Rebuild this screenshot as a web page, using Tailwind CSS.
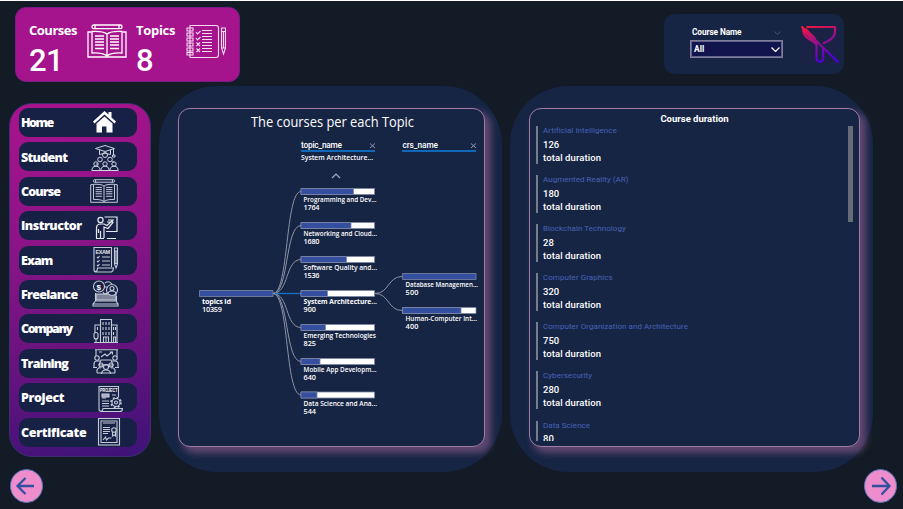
<!DOCTYPE html>
<html lang="en">
<head>
<meta charset="utf-8">
<title>Courses dashboard</title>
<script src="https://cdn.jsdelivr.net/npm/@tailwindcss/browser@4"></script>
</head>
<body class="bg-[#121b26] overflow-hidden">
<svg class="hidden">
  <symbol id="book" viewBox="0 0 40 34">
    <g fill="none" stroke="currentColor" stroke-width="1.3">
      <rect x="5" y="1" width="30" height="3.6" rx="1.6"/><path d="M8 1v3.6M32 1v3.6M4.500 8H1v25h38V8h-3.500"/>
      <path d="M20 10q-4-3-15-2.500V29q11-.5 15 3 4-3.500 15-3V7.500Q24 7 20 10zv22"/>
      <path d="M8 12h9M8 15h9M8 18h9M8 21h9M8 24.500h9M23 12h9M23 15h9M23 18h9M23 21h9M23 24.500h9"/>
    </g>
  </symbol>
</svg>
<div class="w-[903px] h-[509px] flex flex-col border-t border-white font-['Comic_Sans_MS','Open_Sans',sans-serif] text-white">

  <header class="h-[85px] shrink-0 flex justify-between pl-[15px] pr-[59px]">
    <section class="mt-[6px] w-[225px] h-[75px] rounded-[11px] bg-[#a5138d] border border-[#7b1c86] flex pl-[13px]">
      <div class="w-[58px] pt-[13px]">
        <h2 class="text-[13px] leading-[18px] font-bold tracking-[-0.5px]">Courses</h2>
        <p class="font-['Roboto',sans-serif] text-[31px] leading-[43px] tracking-[-0.5px] font-medium">21</p>
      </div>
      <svg class="w-10 h-[34px] mt-4"><use href="#book"/></svg>
      <div class="w-[49px] ml-[9px] pt-[13px]">
        <h2 class="text-[13px] leading-[18px] font-bold tracking-[-0.3px]">Topics</h2>
        <p class="font-['Roboto',sans-serif] text-[31px] leading-[43px] font-medium tracking-[-0.5px]">8</p>
      </div>
      <svg class="w-[40px] h-[35px] mt-4 ml-px" viewBox="0 0 40 35" fill="none" stroke="#f5dcf1" stroke-width="1.1">
        <path d="M4 4V1.500h26a2.500 2.500 0 0 1 2.500 2.500v27a2.500 2.500 0 0 1-2.500 2.500H4V31"/>
        <path d="M4 4v27M1 4h6v3H1zM1 9h6v3H1zM1 14h6v3H1zM1 19h6v3H1zM1 24h6v3H1zM1 28.500h6v2.500H1z"/>
        <path d="M10 8l1.500 2 3-3M10 14l1.500 2 3-3M10.500 18.500l3.500 3.500M14 18.500l-3.500 3.500M10.500 24.500l3.500 3.500M14 24.500l-3.500 3.500"/>
        <path d="M16 6.500h10M16 9.500h10M16 12.500h10M16 15.500h10M16 18.500h10M16 21.500h10M16 24.500h10M16 27.500h10"/>
        <path d="M35.500 4h4v20l-2 6-2-6zM35.500 7.500h4M35.500 24h4M37.500 8v16"/>
      </svg>
    </section>

    <section class="mt-[13px] w-[180px] h-[60px] rounded-[10px] bg-[#172545] flex pl-[26px]">
      <div class="w-[93px] pt-[11px]">
        <div class="flex items-center justify-between h-[15px] pl-[2px] pr-[2px]">
          <span class="font-['Roboto',sans-serif] font-bold text-[8.300px] leading-[13px] tracking-[-0.1px]">Course Name</span>
          <svg class="w-[7px] h-1" viewBox="0 0 7 4" fill="none" stroke="#4c5468"><path d="M.5.5l3 3 3-3"/></svg>
        </div>
        <div class="h-[18px] border border-[#7f7f9c] outline outline-1 -outline-offset-2 outline-[#62628a] bg-[#12154d] flex items-center justify-between pl-[3px] pr-[2px]">
          <span class="font-['Roboto',sans-serif] font-bold text-[8.500px] pt-px">All</span>
          <svg class="w-[9px] h-[5px]" viewBox="0 0 9 5" fill="none" stroke="#fff" stroke-width="1.200"><path d="M.5.5l4 4 4-4"/></svg>
        </div>
      </div>
      <svg class="ml-[17px] mt-[11px] w-[40px] h-[39px] bg-[#1a2246]" viewBox="0 0 40 39" fill="none" stroke="url(#funnel)" stroke-width="2.200" stroke-linejoin="round">
        <defs><linearGradient id="funnel" gradientUnits="userSpaceOnUse" x1="6" y1="0" x2="20" y2="38"><stop stop-color="#fb1738"/><stop offset=".5" stop-color="#96108b"/><stop offset="1" stop-color="#4b00db"/></linearGradient></defs>
        <path d="M1.500 1.500l37 36M6.500 2h28.500v4.500q0 6-7 9.500l-5 2.500M3 3q0 7.500 6 11 4 2.500 7.500 5v14.500a3.300 3.300 0 0 0 6.600 0V23"/><path d="M4 5l12 13M5 4l10 10" stroke-width="3"/>
      </svg>
    </section>
  </header>

  <main class="h-[386px] shrink-0 flex">
    <nav class="ml-[9px] mt-[17px] w-[142px] h-[354px] rounded-[23px] border border-[#392f70] bg-linear-[168deg,#a9138c_0%,#8b1487_38%,#64137e_72%,#3d1378_100%] pl-[9px] pt-1 flex flex-col gap-[5.400px] text-[12.500px] font-extrabold">
      <a class="h-[29px] shrink-0 w-[118px] rounded-[9px] bg-[#172145] flex items-center"><span class="w-[72px] pl-[2px] pt-[2px] tracking-[-1.500px]">Home</span>
        <svg class="w-[30px] h-[29px]" viewBox="0 0 30 29" fill="#fff"><path d="M13.500 3L2 13.500l1.500 2L13.500 6.500 23.500 15.500l1.500-2-4.500-4V4h-3v2.500zM13.500 8.500L5.500 15.500v9h5.500v-6h4.500v6H21.500v-9z"/></svg></a>
      <a class="h-[29px] shrink-0 w-[118px] rounded-[9px] bg-[#172145] flex items-center"><span class="w-[72px] pl-[2px] pt-[2px] tracking-[-0.700px]">Student</span>
        <svg class="w-[30px] h-[29px]" viewBox="0 0 30 29" fill="none" stroke="#cfd3df" stroke-width="1"><path d="M4.500 6.500l9.500-3 9.500 3-9.500 3zM8.500 8v4.500q5.500-2.500 11 0V8M22.500 7v6M21.500 13h2.500v2h-2.500z"/><circle cx="14" cy="13" r="2.500"/><circle cx="9" cy="17.500" r="2.300"/><circle cx="19" cy="17.500" r="2.300"/><circle cx="5" cy="22" r="2.200"/><circle cx="14" cy="22" r="2.200"/><circle cx="23" cy="22" r="2.200"/><path d="M1 29v-2q1-3 4-3t4 3v2M10 29v-2q1-3 4-3t4 3v2M19 29v-2q1-3 4-3t4 3v2M1 28.500h26M6 23v-2M22 21v-2"/></svg></a>
      <a class="h-[29px] shrink-0 w-[118px] rounded-[9px] bg-[#172145] flex items-center text-white"><span class="w-[70px] pl-[2px] pt-[2px] tracking-[-0.900px]">Course</span>
        <svg class="w-[28px] h-[24px] ml-px text-[#d5d9e5]" viewBox="0 0 40 34" preserveAspectRatio="none"><use href="#book"/></svg></a>
      <a class="h-[29px] shrink-0 w-[118px] rounded-[9px] bg-[#172145] flex items-center"><span class="w-[72px] pl-[2px] pt-[2px] tracking-[-0.500px]">Instructor</span>
        <svg class="w-[30px] h-[29px]" viewBox="0 0 30 29" fill="none" stroke="#e8eaf0" stroke-width="1.2"><circle cx="9.500" cy="9" r="2.600"/><path d="M13.500 6H26v14.500H15M17 9h6M16 11h5M5.500 27v-10q0-4 4-4h3.500l3 1.500 5-4.500 1 1.500-5 6-4-1.500V27M9.500 20v7M7.500 18v4M5 27.500h8M16 27.500h9"/></svg></a>
      <a class="h-[29px] shrink-0 w-[118px] rounded-[9px] bg-[#172145] flex items-center"><span class="w-[72px] pl-[2px] pt-[2px] tracking-[-0.900px]">Exam</span>
        <svg class="w-[30px] h-[29px]" viewBox="0 0 30 29" fill="none" stroke="#c5cad9" stroke-width="1.100"><path d="M3 24V1.500h17.500V21M3 24q0 2 2.500 2h15q2-1 2-4h-16q0 4-3 3.500M6 11l1 1 1.500-2M6 15l1 1 1.500-2M6 19l1 1 1.500-2M11 11h8M11 15h8M11 19h8M23.500 2h3v16l-1.500 4-1.500-4zM23.500 5h3M23.500 17.500h3M25 5v12"/><text x="4.500" y="7.800" font-size="5.500" font-family="Liberation Sans" font-weight="bold" fill="#e0e3eb" stroke="none" textLength="14.500">EXAM</text></svg></a>
      <a class="h-[29px] shrink-0 w-[118px] rounded-[9px] bg-[#172145] flex items-center"><span class="w-[72px] pl-[2px] pt-[2px] tracking-[-0.700px]">Freelance</span>
        <svg class="w-[30px] h-[29px]" viewBox="0 0 30 29" fill="none" stroke="#c5cad9" stroke-width="1.100"><path d="M5 14h20v6H5z" fill="#7e849b"/><path d="M4.500 13v8h21v-5M4.500 21L2 24v2h25v-2l-2-3M2 24h25"/><circle cx="8" cy="6.500" r="5.500" fill="#172145"/><circle cx="21" cy="10" r="5.500" fill="#172145"/><circle cx="21" cy="8.500" r="2"/><path d="M17 14q0-3 4-3t4 3M14 3q4-3 7 1M12 12q1 3 4 1M13 7h3"/><text x="5.500" y="9.500" font-size="8" font-family="Liberation Sans" fill="#fff" stroke="none">$</text></svg></a>
      <a class="h-[29px] shrink-0 w-[118px] rounded-[9px] bg-[#172145] flex items-center"><span class="w-[72px] pl-[2px] pt-[2px] tracking-[-1.400px]">Company</span>
        <svg class="w-[30px] h-[29px]" viewBox="0 0 30 29" fill="none" stroke="#c5cad9" stroke-width="1.100"><path d="M9.500 28.500V5.500h11v23M9.500 11H4v8M20.500 11H26v17.500M3 28.500h24M12 8v3M15 8v3M18 8v3M12 13v3M15 13v3M18 13v3M12 18v3M15 18v3M18 18v3M22.500 13v3M24.500 13v3M22.500 18v3M6.500 13v3M12.500 28.500V23h5v5.500M15 23v5.500M22.500 28v-5h2v5M5 24v4.500"/><rect x="3" y="18.500" width="4" height="6.500" rx="2"/></svg></a>
      <a class="h-[29px] shrink-0 w-[118px] rounded-[9px] bg-[#172145] flex items-center"><span class="w-[72px] pl-[2px] pt-[2px] tracking-[-0.800px]">Training</span>
        <svg class="w-[30px] h-[29px]" viewBox="0 0 30 29" fill="none" stroke="#c5cad9" stroke-width="1.100"><path d="M5 7V.8h21V8M4 .8h23M10 8l4-3 2 2 5-4M19 3h2.500v2.500M8 3h3"/><circle cx="6" cy="9" r="2.200"/><circle cx="24" cy="9" r="2.200"/><path d="M3 19v-4q0-3 3-3h3M27 19v-4q0-3-3-3h-3M2 18.500h4M24 18.500h4M8 16l2-5h10l2 5z"/><circle cx="10" cy="16" r="2"/><circle cx="20" cy="16" r="2"/><circle cx="15" cy="18" r="2.500"/><path d="M6 24v-3q1-3 4-2M24 24v-3q-1-3-4-2M10.500 25q0-4 4.500-4t4.500 4M6 24h18"/></svg></a>
      <a class="h-[29px] shrink-0 w-[118px] rounded-[9px] bg-[#172145] flex items-center"><span class="w-[72px] pl-[2px] pt-[2px] tracking-[-0.400px]">Project</span>
        <svg class="w-[33px] h-[29px]" viewBox="0 0 33 29" fill="none" stroke="#c5cad9" stroke-width="1.100"><path d="M8 26V3.500h19.500V14M8 26q0 2.500 3 2.500h18q2.500 0 2.500-3H12q0 2.500-2 3M11 15h4M11 18h7M11 20.500h7M11 23h7M21 12h4"/><path d="M11 11h7v3h-7z" fill="#a8aec2"/><circle cx="25" cy="19.500" r="4"/><circle cx="25" cy="19.500" r="1.500"/><circle cx="25" cy="19.500" r="5" stroke-width="1.600" stroke-dasharray="2 1.930"/><text x="9" y="9" font-size="5" font-family="Liberation Sans" font-weight="bold" fill="#fff" stroke="none" textLength="17.500" lengthAdjust="spacingAndGlyphs">PROJECT</text></svg></a>
      <a class="h-[29px] shrink-0 w-[118px] rounded-[9px] bg-[#172145] flex items-center"><span class="w-[72px] pl-[2px] pt-[2px] tracking-[-0.300px]">Certificate</span>
        <svg class="w-[30px] h-[29px]" viewBox="0 0 30 29" fill="none" stroke="#c5cad9" stroke-width="1.100"><rect x="7.500" y=".5" width="21" height="26.500"/><path d="M10 3h16v21.500H10zM12 5h12M12 9.500h7M12 11.500h7M12 13.500h7M12 15.500h5M12 22l2.500-3 1 3 2-2h3M21.500 14v4l1.500-1 1.500 1v-4"/><circle cx="23" cy="12" r="2.300"/></svg></a>
    </nav>

    <section class="ml-[8px] w-[343px] rounded-[58px] bg-[#172545] pl-[19px] pt-[22px]">
      <div class="w-[307px] h-[339px] rounded-[12px] border border-[#a27ba5] bg-[#172545] shadow-[5px_5px_7px_1px_rgba(170,108,158,0.5)]">
        <svg class="w-[305px] h-[337px]" viewBox="179 109 305 337" fill="#fff" font-family="Comic Sans MS, Open Sans, sans-serif">
          <text x="251" y="127" font-size="14" textLength="163" lengthAdjust="spacingAndGlyphs">The courses per each Topic</text>
          <g font-family="Roboto, sans-serif" font-size="8.300" font-weight="500">
            <text x="301" y="148.200" textLength="41">topic_name</text><text x="402.500" y="148.200" textLength="35.500">crs_name</text>
          </g>
          <path d="M370 143.500l5 4.500M375 143.500l-5 4.500M471 143.500l5 4.500M476 143.500l-5 4.500" stroke="#a8b4c4" stroke-width=".8"/>
          <path d="M301 151h74M402 151h74" stroke="#1068b8" stroke-width="1.800"/>
          <path d="M332 178l4-4 4 4" fill="none" stroke="#a9b0bc" stroke-width="1.100"/>
          <g fill="none" stroke="#8b93a5">
            <path d="M273 293.500C289 293.500 285 191.500 301 191.500M273 293.500C289 293.500 285 225.500 301 225.500M273 293.500C289 293.500 285 259.500 301 259.500M273 293.500C289 293.500 285 327.500 301 327.500M273 293.500C289 293.500 285 361.500 301 361.500M273 293.500C289 293.500 285 395 301 395M375 293.500C389 293.500 388 276.500 402 276.500M375 293.500C389 293.500 388 310.500 402 310.500"/>
            <path d="M275 293.500h26" stroke="#1470c4" stroke-width="1.300"/>
          </g>
          <g stroke="#7d86a3" stroke-width=".8">
            <path d="M301 188.500h73.500v6H301zM301 222.500h73.500v6H301zM301 256.500h73.500v6H301zM301 290.500h73.500v6H301zM301 324.500h73.500v6H301zM301 358.500h73.500v6H301zM301 392h73.500v6H301zM402.500 307.500H476v6h-73.500z"/>
            <path fill="#344f9f" d="M199.500 290.500H273v6h-73.500zM301 188.500h52.500v6H301zM301 222.500h50v6H301zM301 256.500h45.500v6H301zM301 290.500h26.500v6H301zM301 324.500h24.500v6H301zM301 358.500h19v6H301zM301 392h16v6H301zM402.500 273.500H476v6h-73.500zM402.500 307.500h58.500v6h-58.500z"/>
          </g>
          <g font-size="7.300" font-weight="600">
            <text x="301" y="160" textLength="72" lengthAdjust="spacingAndGlyphs">System Architecture...</text>
            <text x="202" y="304" textLength="29" font-weight="700">topics id</text><text x="202" y="312" textLength="20">10359</text>
            <text x="303.500" y="202" textLength="73" lengthAdjust="spacingAndGlyphs">Programming and Dev...</text><text x="303.500" y="210" textLength="16">1764</text>
            <text x="303.500" y="236" textLength="73.500" lengthAdjust="spacingAndGlyphs">Networking and Cloud...</text><text x="303.500" y="244" textLength="16">1680</text>
            <text x="303.500" y="270" textLength="73.500" lengthAdjust="spacingAndGlyphs">Software Quality and...</text><text x="303.500" y="278" textLength="16">1536</text>
            <text x="303.500" y="304" textLength="73.500" lengthAdjust="spacingAndGlyphs" font-weight="700">System Architecture...</text><text x="303.500" y="312" textLength="12.500">900</text>
            <text x="303.500" y="338" textLength="72.500" lengthAdjust="spacingAndGlyphs">Emerging Technologies</text><text x="303.500" y="346" textLength="12.500">825</text>
            <text x="303.500" y="372" textLength="73" lengthAdjust="spacingAndGlyphs">Mobile App Developm...</text><text x="303.500" y="380" textLength="12.500">640</text>
            <text x="303.500" y="406" textLength="73.500" lengthAdjust="spacingAndGlyphs">Data Science and Ana...</text><text x="303.500" y="414" textLength="12.500">544</text>
            <text x="405.500" y="287" textLength="72.500" lengthAdjust="spacingAndGlyphs">Database Managemen...</text><text x="405.500" y="295" textLength="13">500</text>
            <text x="405.500" y="321" textLength="71.500" lengthAdjust="spacingAndGlyphs">Human-Computer Int...</text><text x="405.500" y="329" textLength="13">400</text>
          </g>
        </svg>
      </div>
    </section>

    <section class="ml-[8px] w-[363px] rounded-[58px] bg-[#172545] pl-[19px] pt-[22px]">
      <div class="w-[331px] h-[339px] rounded-[12px] border border-[#a27ba5] bg-[#172545] shadow-[5px_5px_7px_1px_rgba(170,108,158,0.5)] font-['Roboto',sans-serif]">
        <h2 class="h-[17px] pt-[2px] text-center text-[9.500px] leading-[15px] font-bold">Course duration</h2>
        <div class="flex justify-between h-[315px] overflow-hidden pl-[6px] pr-[6px] text-[9.500px] font-medium">
          <ul class="flex flex-col gap-[11.100px]">
            <li class="h-[38px] shrink-0 border-l-2 border-[#777c8d] pl-[5px] leading-[13px]"><h3 class="text-[8px] leading-[9px] h-[11.500px] font-normal tracking-[0.050px] text-[#4762b9]">Artificial Intelligence</h3><p>126</p><p class="tracking-[0.100px]">total duration</p></li>
            <li class="h-[38px] shrink-0 border-l-2 border-[#777c8d] pl-[5px] leading-[13px]"><h3 class="text-[8px] leading-[9px] h-[11.500px] font-normal tracking-[0.050px] text-[#4762b9]">Augmented Reality (AR)</h3><p>180</p><p class="tracking-[0.100px]">total duration</p></li>
            <li class="h-[38px] shrink-0 border-l-2 border-[#777c8d] pl-[5px] leading-[13px]"><h3 class="text-[8px] leading-[9px] h-[11.500px] font-normal tracking-[0.050px] text-[#4762b9]">Blockchain Technology</h3><p>28</p><p class="tracking-[0.100px]">total duration</p></li>
            <li class="h-[38px] shrink-0 border-l-2 border-[#777c8d] pl-[5px] leading-[13px]"><h3 class="text-[8px] leading-[9px] h-[11.500px] font-normal tracking-[0.050px] text-[#4762b9]">Computer Graphics</h3><p>320</p><p class="tracking-[0.100px]">total duration</p></li>
            <li class="h-[38px] shrink-0 border-l-2 border-[#777c8d] pl-[5px] leading-[13px]"><h3 class="text-[8px] leading-[9px] h-[11.500px] font-normal tracking-[0.050px] text-[#4762b9]">Computer Organization and Architecture</h3><p>750</p><p class="tracking-[0.100px]">total duration</p></li>
            <li class="h-[38px] shrink-0 border-l-2 border-[#777c8d] pl-[5px] leading-[13px]"><h3 class="text-[8px] leading-[9px] h-[11.500px] font-normal tracking-[0.050px] text-[#4762b9]">Cybersecurity</h3><p>280</p><p class="tracking-[0.100px]">total duration</p></li>
            <li class="h-[38px] shrink-0 border-l-2 border-[#777c8d] pl-[5px] leading-[13px]"><h3 class="text-[8px] leading-[9px] h-[11.500px] font-normal tracking-[0.050px] text-[#4762b9]">Data Science</h3><p>80</p><p class="tracking-[0.100px]">total duration</p></li>
          </ul>
          <div class="w-[5px] h-[96px] bg-[#686c79]"></div>
        </div>
      </div>
    </section>
  </main>

  <footer class="-mt-[3px] flex justify-between pl-[10px] pr-[6px]">
    <svg class="w-[33px] h-[34px]" viewBox="0 0 33 34"><ellipse cx="16.500" cy="17" rx="16" ry="16.500" fill="#ee8dcc" stroke="#5577bd"/><path d="M24 17H8M15.500 9L7.500 17l8 8" fill="none" stroke="#344f9f" stroke-width="2.300"/></svg>
    <svg class="w-[33px] h-[34px]" viewBox="0 0 33 34"><ellipse cx="16.500" cy="17" rx="16" ry="16.500" fill="#ee8dcc" stroke="#5577bd"/><path d="M8 17h17M17.500 8.500l8 8.500-8 8.500" fill="none" stroke="#344f9f" stroke-width="2.300"/></svg>
  </footer>
</div>
</body>
</html>
